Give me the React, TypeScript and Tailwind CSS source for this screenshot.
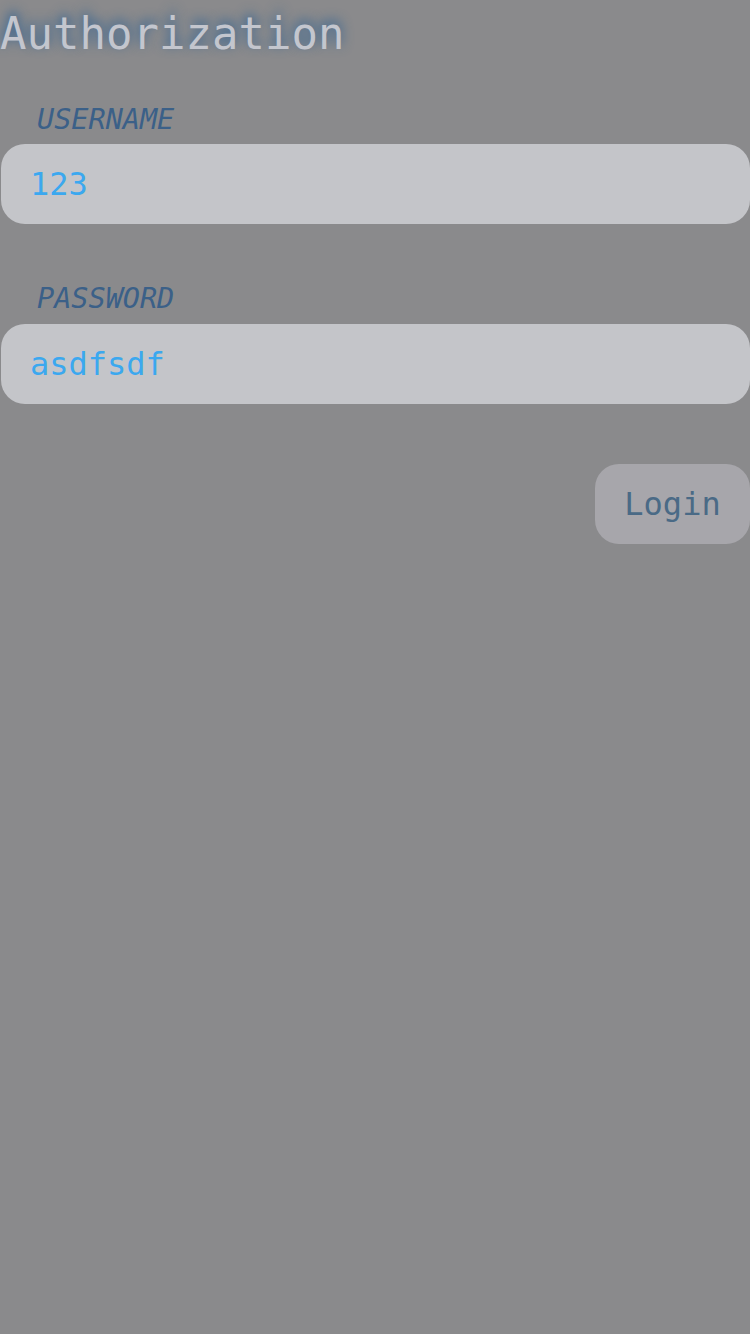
import React from "react";

export default function App() {
  const mono = "font-['DejaVu_Sans_Mono',monospace]";
  return (
    <div className={`min-h-[1334px] w-[750px] bg-[#8a8a8c] ${mono}`}>
      <div className="pt-[12px]">
        <h1 className="h-[44px] text-[44px] leading-none text-[#c3c6ce] [text-shadow:0_-4px_12px_#245c92]">
          Authorization
        </h1>
      </div>
      <div className="mt-[50px] h-[28px] pl-[37px] text-[28.5px] italic leading-none text-[#3b6088]">
        USERNAME
      </div>
      <div className="ml-px mt-[10px] flex h-[80px] items-center rounded-[24px] bg-[#c4c5c9] pl-[29px] text-[32px] leading-none text-[#3ba8ef]">
        123
      </div>
      <div className="mt-[61px] h-[28px] pl-[37px] text-[28.5px] italic leading-none text-[#3b6088]">
        PASSWORD
      </div>
      <div className="ml-px mt-[11px] flex h-[80px] items-center rounded-[24px] bg-[#c4c5c9] pl-[29px] text-[32px] leading-none text-[#3ba8ef]">
        asdfsdf
      </div>
      <div className="mt-[60px] flex justify-end">
        <button className="flex h-[80px] w-[155px] items-center justify-center rounded-[24px] bg-[#a7a6ab] text-[32px] leading-none text-[#4a6a86]">
          Login
        </button>
      </div>
    </div>
  );
}
